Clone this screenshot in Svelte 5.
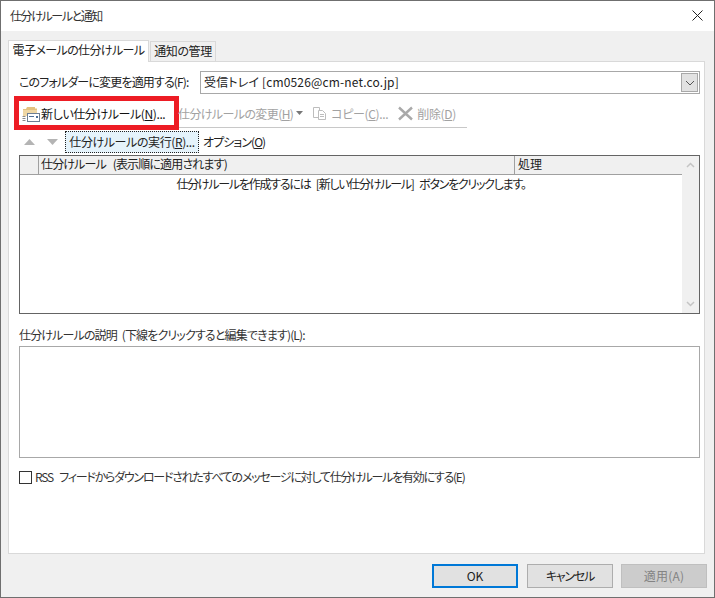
<script>
  const hint = '仕分けルールを作成するには [新しい仕分けルール] ボタンをクリックします。';
</script>

<div class="dialog">
  <div class="titlebar">
    <span class="title">仕分けルールと通知</span>
    <svg class="close" width="11" height="11" viewBox="0 0 11 11"><path d="M0.5 0.5L10.5 10.5M10.5 0.5L0.5 10.5" stroke="#222" stroke-width="1" fill="none" /></svg>
  </div>

  <div class="body">
    <div class="tabs">
      <div class="tab active">電子メールの仕分けルール</div>
      <div class="tab">通知の管理</div>
    </div>

    <div class="panel">
      <div class="folder-row">
        <span class="folder-label">このフォルダーに変更を適用する(F):</span>
        <div class="combo">
          <span class="combo-text">受信トレイ [cm0526@cm-net.co.jp]</span>
          <div class="combo-btn">
            <svg width="10" height="6" viewBox="0 0 10 6"><path d="M1 1L5 5L9 1" stroke="#555" fill="none" /></svg>
          </div>
        </div>
      </div>

      <div class="toolbar">
        <div class="tool new-rule">
          <svg width="18" height="17" viewBox="0 0 18 17">
            <path d="M1 4h3l1-2h8v1.500h2V7H1z" fill="#e3c17f" />
            <path d="M1 5h14v6H1z" fill="#efd7a5" />
            <path d="M0.500 13.500h3M0.500 11.500h3M0.500 15.500h3" stroke="#8a8a8a" />
            <rect x="5.500" y="8.500" width="12" height="8" fill="#fff" stroke="#6d7f95" />
            <path d="M7 11.500h5" stroke="#4f6f96" />
            <path d="M14 11h2v2h-2z" fill="#4f6f96" />
          </svg>
          <span>新しい仕分けルール(<u>N</u>)...</span>
        </div>
        <div class="tool disabled change">
          <span>仕分けルールの変更(<u>H</u>)</span>
          <svg width="7" height="4" viewBox="0 0 7 4"><path d="M0 0h7L3.500 4z" fill="#777" /></svg>
        </div>
        <div class="tool disabled copy">
          <svg width="15" height="15" viewBox="0 0 15 15" fill="#fff" stroke="#bdbdbd">
            <path d="M1.500 1.500h6v10h-6z" />
            <path d="M6.500 4.500h4l3 3v6h-7z" />
            <path d="M8 8.500h4M8 10.500h4" />
          </svg>
          <span>コピー(<u>C</u>)...</span>
        </div>
        <div class="tool disabled remove">
          <svg width="15" height="15" viewBox="0 0 15 15"><path d="M1 1.500L14 13.500M14 1.500L1 13.500" stroke="#a9a9a9" stroke-width="2.400" fill="none" /></svg>
          <span>削除(<u>D</u>)</span>
        </div>
      </div>

      <div class="actions">
        <svg class="arrow up" width="11" height="6" viewBox="0 0 11 6"><path d="M5.500 0L11 6H0z" fill="#b4b4b4" /></svg>
        <svg class="arrow down" width="11" height="6" viewBox="0 0 11 6"><path d="M0 0h11L5.500 6z" fill="#b4b4b4" /></svg>
        <div class="run">仕分けルールの実行(<u>R</u>)...</div>
        <div class="options">オプション(<u>O</u>)</div>
      </div>

      <div class="list">
        <div class="list-main">
          <div class="list-head">
            <div class="col col-blank"></div>
            <div class="col col-rule">仕分けルール (表示順に適用されます)</div>
            <div class="col col-action">処理</div>
          </div>
          <div class="list-hint">{hint}</div>
        </div>
        <div class="scrollbar">
          <svg width="9" height="6" viewBox="0 0 9 6"><path d="M1 5L4.500 1.500L8 5" stroke="#c4c4c4" stroke-width="1.500" fill="none" /></svg>
          <svg width="9" height="6" viewBox="0 0 9 6"><path d="M1 1L4.500 4.500L8 1" stroke="#c4c4c4" stroke-width="1.500" fill="none" /></svg>
        </div>
      </div>

      <div class="desc-label">仕分けルールの説明 (下線をクリックすると編集できます)(L):</div>
      <div class="desc-box"></div>

      <div class="rss">
        <span class="checkbox"></span>
        <span class="rss-text">RSS フィードからダウンロードされたすべてのメッセージに対して仕分けルールを有効にする(E)</span>
      </div>
    </div>

    <div class="footer">
      <div class="btn ok">OK</div>
      <div class="btn cancel">キャンセル</div>
      <div class="btn apply">適用(A)</div>
    </div>
  </div>
</div>

<style>
  :global(body) {
    margin: 0;
    background: #f0f0f0;
  }

  .dialog {
    width: 715px;
    height: 598px;
    box-sizing: border-box;
    border: 1px solid #6f6f6f;
    display: flex;
    flex-direction: column;
    font-family: "Noto Sans CJK JP", "Noto Sans", sans-serif;
    font-size: 12px;
    font-feature-settings: "palt";
    color: #222;
    overflow: hidden;
  }

  .titlebar {
    height: 30px;
    flex: none;
    box-sizing: border-box;
    background: #fff;
    display: flex;
    align-items: center;
    justify-content: space-between;
    padding: 0 11px 1px 9px;
  }

  .title {
    color: #333;
    letter-spacing: -1.4px;
    margin-bottom: 1px;
  }

  .body {
    flex: 1;
    background: #f0f0f0;
    padding: 9px 9px 0 7px;
    display: flex;
    flex-direction: column;
    position: relative;
  }

  .tabs {
    display: flex;
    align-items: flex-end;
    height: 21px;
    position: relative;
    z-index: 1;
  }

  .tab {
    height: 20px;
    line-height: 18px;
    box-sizing: border-box;
    border: 1px solid #d9d9d9;
    border-bottom: none;
    width: 66px;
    margin-left: 1px;
    text-align: center;
    white-space: nowrap;
    color: #222;
    letter-spacing: -0.4px;
  }

  .tab.active {
    height: 22px;
    width: 141px;
    margin-left: 0;
    background: #fff;
    line-height: 18px;
    margin-bottom: -1px;
    letter-spacing: -0.6px;
  }

  .panel {
    height: 493px;
    box-sizing: border-box;
    background: #fff;
    border: 1px solid #d9d9d9;
    padding: 9px 4px 0 10px;
    position: relative;
  }

  .folder-row {
    display: flex;
    align-items: center;
    height: 23px;
  }

  .folder-label {
    width: 181px;
    box-sizing: border-box;
    white-space: nowrap;
    letter-spacing: -0.85px;
    margin-bottom: 2px;
  }

  .combo {
    flex: 1;
    height: 23px;
    box-sizing: border-box;
    border: 1px solid #a8a8a8;
    display: flex;
    align-items: center;
    justify-content: space-between;
    padding: 0 1px 0 3px;
  }

  .combo-text {
    letter-spacing: 0.15px;
    margin-bottom: 2px;
  }

  .combo-btn {
    width: 17px;
    height: 19px;
    box-sizing: border-box;
    background: #e2e2e2;
    border: 1px solid #a8a8a8;
    display: flex;
    align-items: center;
    justify-content: center;
  }

  .toolbar {
    display: flex;
    align-items: center;
    height: 28px;
    padding-top: 2px;
    margin-top: 3px;
    width: 448px;
    border-bottom: 1px solid #c8c8c8;
    white-space: nowrap;
  }

  .tool {
    display: flex;
    align-items: center;
    gap: 4px;
    letter-spacing: -0.35px;
  }

  .new-rule {
    width: 155px;
    box-sizing: border-box;
    padding-left: 3px;
    gap: 1px;
    color: #111;
    outline: 5px solid #ed1c24;
    height: 24px;
    flex: none;
    letter-spacing: -0.4px;
  }

  .disabled {
    color: #a2a2a2;
  }

  .change {
    gap: 3px;
    margin-left: 4px;
    letter-spacing: -0.6px;
  }

  .copy {
    margin-left: 9px;
  }

  .remove {
    margin-left: 10px;
  }

  .actions {
    display: flex;
    align-items: center;
    height: 22px;
    margin-top: 3px;
  }

  .arrow.up {
    margin-left: 5px;
  }

  .arrow.down {
    margin-left: 12px;
  }

  .run {
    margin-left: 7px;
    width: 134px;
    height: 22px;
    line-height: 19px;
    box-sizing: border-box;
    background: #e5f3fb;
    border: 1px dotted #222;
    text-align: center;
    white-space: nowrap;
    letter-spacing: -0.4px;
  }

  .options {
    margin-left: 4px;
    letter-spacing: -0.95px;
    margin-bottom: 2px;
  }

  .list {
    display: flex;
    height: 159px;
    box-sizing: border-box;
    border: 1px solid #646464;
    margin-top: 2px;
  }

  .list-main {
    flex: 1;
    min-width: 0;
  }

  .list-head {
    display: flex;
    height: 18px;
    background: #f0f0f0;
    border-bottom: 1px solid #a0a0a0;
    line-height: 16px;
  }

  .col-blank {
    width: 19px;
    border-right: 1px solid #a0a0a0;
  }

  .col {
    box-sizing: border-box;
    white-space: nowrap;
  }

  .col-rule {
    width: 476px;
    padding-left: 2px;
    border-right: 1px solid #a0a0a0;
    letter-spacing: -0.85px;
    word-spacing: 5px;
  }

  .col-action {
    padding-left: 3px;
  }

  .list-hint {
    text-align: center;
    line-height: 18px;
    letter-spacing: -1.25px;
    word-spacing: 4px;
  }

  .scrollbar {
    width: 17px;
    flex: none;
    background: #f0f0f0;
    display: flex;
    flex-direction: column;
    align-items: center;
    justify-content: space-between;
    padding: 6px 0;
    box-sizing: border-box;
  }

  .desc-label {
    margin-top: 12px;
    height: 20px;
    line-height: 18px;
    color: #333;
    letter-spacing: -0.85px;
    word-spacing: 3px;
  }

  .desc-box {
    height: 112px;
    box-sizing: border-box;
    border: 1px solid #a8a8a8;
  }

  .rss {
    display: flex;
    align-items: center;
    gap: 3px;
    margin-top: 11px;
    height: 16px;
    color: #333;
    white-space: nowrap;
  }

  .rss-text {
    letter-spacing: -1.25px;
    word-spacing: 5px;
    margin-bottom: 1px;
  }

  .checkbox {
    width: 13px;
    height: 13px;
    box-sizing: border-box;
    border: 1px solid #333;
    flex: none;
  }

  .footer {
    display: flex;
    justify-content: flex-end;
    gap: 9px;
    margin-top: 10px;
    margin-right: -2px;
  }

  .btn {
    width: 86px;
    height: 24px;
    line-height: 21px;
    box-sizing: border-box;
    background: #e1e1e1;
    border: 1px solid #adadad;
    text-align: center;
    color: #222;
  }

  .ok {
    border: 2px solid #0078d7;
    line-height: 19px;
  }

  .cancel {
    letter-spacing: -1.2px;
    margin-right: -1px;
  }

  .apply {
    background: #cccccc;
    border-color: #bfbfbf;
    color: #838383;
    letter-spacing: 0.2px;
  }
</style>
